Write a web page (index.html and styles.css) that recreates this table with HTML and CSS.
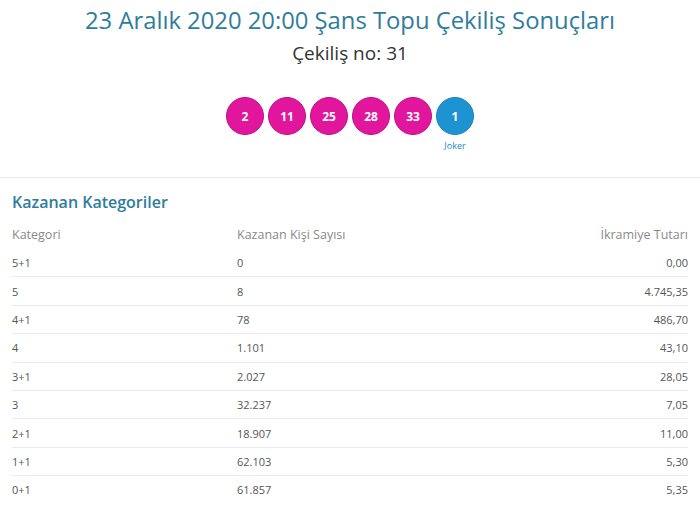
FILE: index.html
```html
<!DOCTYPE html>
<html lang="tr">
<head>
  <meta charset="UTF-8">
  <meta name="viewport" content="width=device-width, initial-scale=1.0">
  <title>Şans Topu Çekiliş Sonuçları</title>
  <link rel="stylesheet" href="styles.css">
</head>
<body>
  <header class="draw-head">
    <h1 class="draw-title">23 Aralık 2020 20:00 Şans Topu Çekiliş Sonuçları</h1>
    <div class="draw-no">Çekiliş no: 31</div>
    <div class="balls">
      <div class="ball">2</div>
      <div class="ball">11</div>
      <div class="ball">25</div>
      <div class="ball">28</div>
      <div class="ball">33</div>
      <div class="ball-wrap">
        <div class="ball joker">1</div>
        <span class="joker-label">Joker</span>
      </div>
    </div>
  </header>

  <section class="winners">
    <h2 class="winners-title">Kazanan Kategoriler</h2>
    <table class="winners-table">
      <thead>
        <tr>
          <th>Kategori</th>
          <th>Kazanan Kişi Sayısı</th>
          <th class="amount">İkramiye Tutarı</th>
        </tr>
      </thead>
      <tbody>
        <tr><td>5+1</td><td>0</td><td class="amount">0,00</td></tr>
        <tr><td>5</td><td>8</td><td class="amount">4.745,35</td></tr>
        <tr><td>4+1</td><td>78</td><td class="amount">486,70</td></tr>
        <tr><td>4</td><td>1.101</td><td class="amount">43,10</td></tr>
        <tr><td>3+1</td><td>2.027</td><td class="amount">28,05</td></tr>
        <tr><td>3</td><td>32.237</td><td class="amount">7,05</td></tr>
        <tr><td>2+1</td><td>18.907</td><td class="amount">11,00</td></tr>
        <tr><td>1+1</td><td>62.103</td><td class="amount">5,30</td></tr>
        <tr><td>0+1</td><td>61.857</td><td class="amount">5,35</td></tr>
      </tbody>
    </table>
  </section>
</body>
</html>
```

FILE: styles.css
```css
/* Genel */
body {
  margin: 0;
  font-family: "Open Sans", Arial, sans-serif;
  background: #fff;
  color: #333;
}

/* Başlık alanı */
.draw-head {
  text-align: center;
  padding-top: 4px;
  border-bottom: 1px solid #ececec;
  padding-bottom: 38px;
}

.draw-title {
  margin: 0;
  font-size: 23.8px;
  font-weight: 400;
  color: #2f7d9c;
  line-height: 32px;
}

.draw-no {
  margin-top: 4px;
  font-size: 19px;
  color: #333;
  line-height: 26px;
}

/* Toplar */
.balls {
  display: flex;
  justify-content: center;
  gap: 4px;
  margin-top: 31px;
}

.ball-wrap {
  display: flex;
  flex-direction: column;
  align-items: center;
}

.ball {
  width: 38px;
  height: 38px;
  border-radius: 50%;
  background: #e1169d;
  border: 1px solid #c40d86;
  box-sizing: border-box;
  color: #fff;
  font-size: 12px;
  font-weight: 700;
  display: flex;
  align-items: center;
  justify-content: center;
}

.ball.joker {
  background: #1d93d2;
  border-color: #1a84bd;
}

.joker-label {
  margin-top: 4px;
  font-size: 9px;
  color: #1d8ac4;
  height: 0;
}

/* Kazanan kategoriler */
.winners {
  padding: 0 12px;
}

.winners-title {
  margin: 13px 0 0;
  font-size: 16px;
  font-weight: 600;
  color: #2f7d9c;
  line-height: 22px;
}

.winners-table {
  width: 100%;
  border-collapse: collapse;
  margin-top: 7px;
  font-size: 11px;
}

.winners-table th {
  font-weight: 400;
  font-size: 12.5px;
  color: #8a8a8a;
  text-align: left;
  height: 29px;
  padding: 0;
}

.winners-table td {
  color: #555;
  padding: 0;
  height: 27.4px;
  border-bottom: 1px solid #ececec;
}

.winners-table tbody tr:last-child td {
  border-bottom: none;
}

.winners-table th:first-child,
.winners-table td:first-child {
  width: 225px;
}

.winners-table .amount {
  text-align: right;
}
```
